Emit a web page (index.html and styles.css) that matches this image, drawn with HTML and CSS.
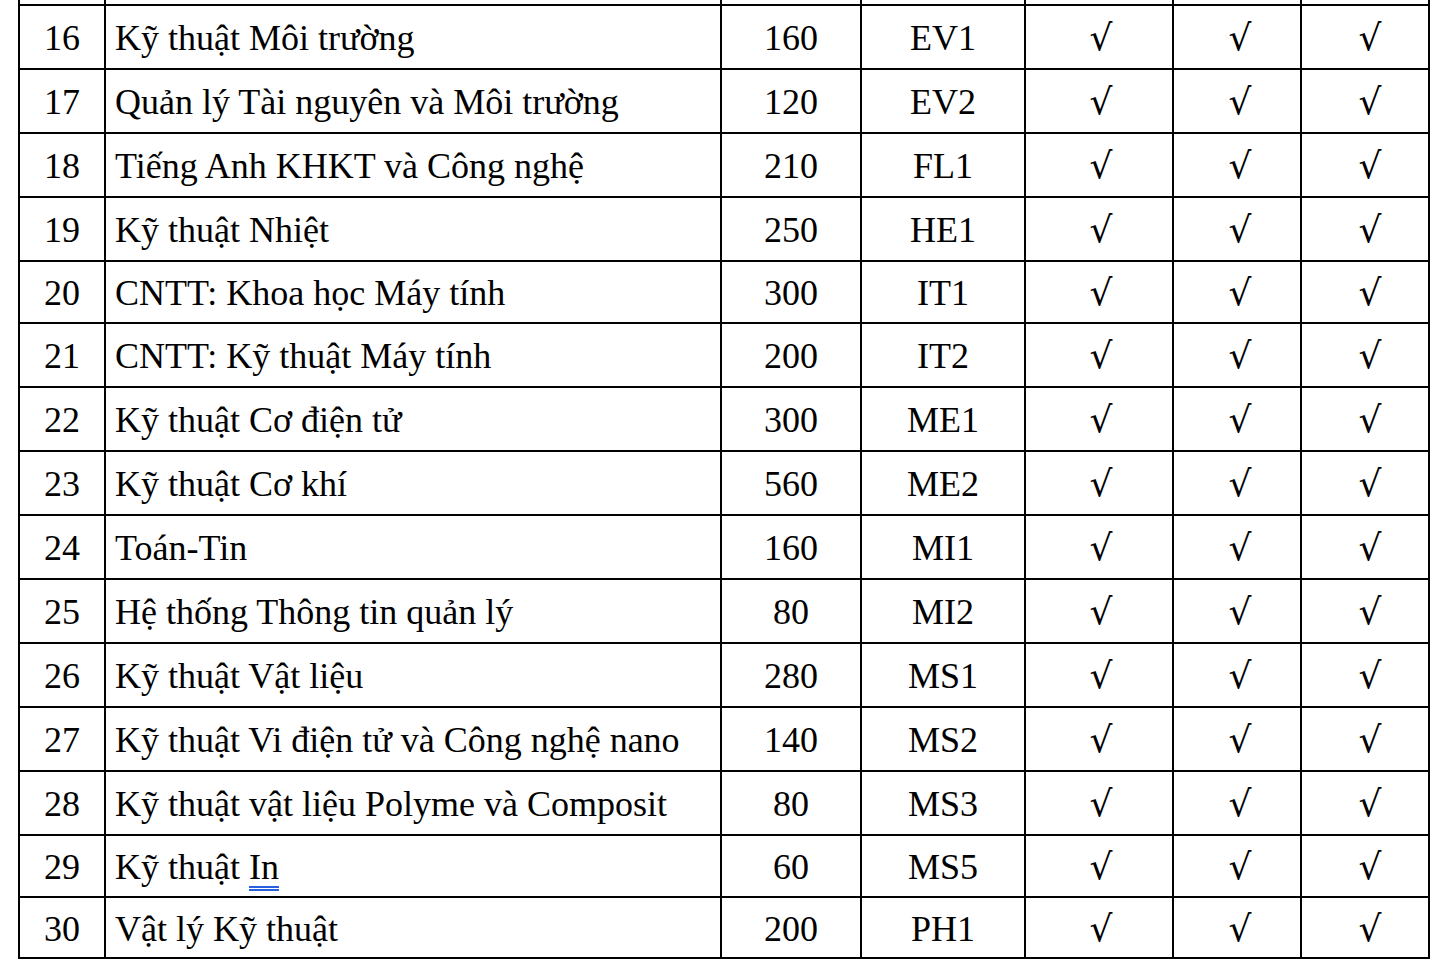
FILE: index.html
```html
<!DOCTYPE html>
<html lang="vi">
<head>
<meta charset="utf-8">
<link rel="stylesheet" href="styles.css">
</head>
<body>
<div class="page">
<table class="grid">
<colgroup>
<col class="c-stt"><col class="c-name"><col class="c-qty"><col class="c-code"><col class="c-chk"><col class="c-chk2"><col class="c-chk2">
</colgroup>
<tbody>
<tr class="stub"><td></td><td></td><td></td><td></td><td></td><td></td><td></td></tr>
<tr class="r64"><td class="stt">16</td><td class="name">Kỹ thuật Môi trường</td><td class="num">160</td><td class="num">EV1</td><td class="chk">√</td><td class="chk b">√</td><td class="chk c">√</td></tr>
<tr class="r64"><td class="stt">17</td><td class="name">Quản lý Tài nguyên và Môi trường</td><td class="num">120</td><td class="num">EV2</td><td class="chk">√</td><td class="chk b">√</td><td class="chk c">√</td></tr>
<tr class="r64"><td class="stt">18</td><td class="name">Tiếng Anh KHKT và Công nghệ</td><td class="num">210</td><td class="num">FL1</td><td class="chk">√</td><td class="chk b">√</td><td class="chk c">√</td></tr>
<tr class="r64"><td class="stt">19</td><td class="name">Kỹ thuật Nhiệt</td><td class="num">250</td><td class="num">HE1</td><td class="chk">√</td><td class="chk b">√</td><td class="chk c">√</td></tr>
<tr class="r62"><td class="stt">20</td><td class="name">CNTT: Khoa học Máy tính</td><td class="num">300</td><td class="num">IT1</td><td class="chk">√</td><td class="chk b">√</td><td class="chk c">√</td></tr>
<tr class="r64"><td class="stt">21</td><td class="name">CNTT: Kỹ thuật Máy tính</td><td class="num">200</td><td class="num">IT2</td><td class="chk">√</td><td class="chk b">√</td><td class="chk c">√</td></tr>
<tr class="r64"><td class="stt">22</td><td class="name">Kỹ thuật Cơ điện tử</td><td class="num">300</td><td class="num">ME1</td><td class="chk">√</td><td class="chk b">√</td><td class="chk c">√</td></tr>
<tr class="r64"><td class="stt">23</td><td class="name">Kỹ thuật Cơ khí</td><td class="num">560</td><td class="num">ME2</td><td class="chk">√</td><td class="chk b">√</td><td class="chk c">√</td></tr>
<tr class="r64"><td class="stt">24</td><td class="name">Toán-Tin</td><td class="num">160</td><td class="num">MI1</td><td class="chk">√</td><td class="chk b">√</td><td class="chk c">√</td></tr>
<tr class="r64"><td class="stt">25</td><td class="name">Hệ thống Thông tin quản lý</td><td class="num">80</td><td class="num">MI2</td><td class="chk">√</td><td class="chk b">√</td><td class="chk c">√</td></tr>
<tr class="r64"><td class="stt">26</td><td class="name">Kỹ thuật Vật liệu</td><td class="num">280</td><td class="num">MS1</td><td class="chk">√</td><td class="chk b">√</td><td class="chk c">√</td></tr>
<tr class="r64"><td class="stt">27</td><td class="name">Kỹ thuật Vi điện tử và Công nghệ nano</td><td class="num">140</td><td class="num">MS2</td><td class="chk">√</td><td class="chk b">√</td><td class="chk c">√</td></tr>
<tr class="r64"><td class="stt">28</td><td class="name">Kỹ thuật vật liệu Polyme và Composit</td><td class="num">80</td><td class="num">MS3</td><td class="chk">√</td><td class="chk b">√</td><td class="chk c">√</td></tr>
<tr class="r62"><td class="stt">29</td><td class="name">Kỹ thuật <span class="mark">In</span></td><td class="num">60</td><td class="num">MS5</td><td class="chk">√</td><td class="chk b">√</td><td class="chk c">√</td></tr>
<tr class="r61"><td class="stt">30</td><td class="name">Vật lý Kỹ thuật</td><td class="num">200</td><td class="num">PH1</td><td class="chk">√</td><td class="chk b">√</td><td class="chk c">√</td></tr>
</tbody>
</table>
</div>
</body>
</html>
```
FILE: styles.css
```css
html, body {
  margin: 0;
  padding: 0;
  background: #ffffff;
}
.page {
  padding-left: 18px;
  width: 1446px;
  height: 968px;
  overflow: hidden;
  box-sizing: border-box;
}
.grid {
  border-collapse: collapse;
  table-layout: fixed;
  width: 1412px;
  font-family: "Liberation Serif", "Times New Roman", serif;
  font-size: 36px;
  color: #000;
}
.c-stt { width: 86px; }
.c-name { width: 616px; }
.c-qty { width: 140px; }
.c-code { width: 164px; }
.c-chk { width: 148px; }
.c-chk2 { width: 128px; }
.grid td {
  border: 2px solid #000;
  padding: 2px 0 0 0;
  vertical-align: middle;
  line-height: 40px;
  white-space: nowrap;
}
.grid tr.stub td {
  border-top-style: none;
  padding: 0;
  height: 4px;
  line-height: 0;
}
.r64 td { height: 60px; }
.r62 td { height: 58px; }
.r61 td { height: 57px; }
.stt, .num { text-align: center; }
.name { padding-left: 9px !important; text-align: left; }
.chk {
  text-align: center;
  font-family: "DejaVu Sans", "Liberation Sans", sans-serif;
  font-size: 36px;
  padding-left: 4px !important;
}
.chk.b { padding-left: 6px !important; }
.chk.c { padding-left: 10px !important; }
.mark {
  text-decoration-line: underline;
  text-decoration-style: double;
  text-decoration-color: #2a5fe0;
  text-decoration-thickness: 1.5px;
  text-underline-offset: 7px;
}
```
